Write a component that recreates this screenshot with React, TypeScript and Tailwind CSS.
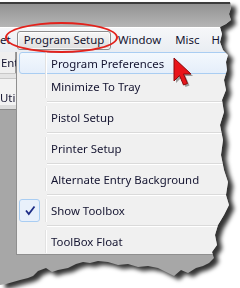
import React from 'react';

type Item = { label: string; sep?: boolean; checked?: boolean; active?: boolean };

const items: Item[] = [
  { label: 'Program Preferences', active: true },
  { label: 'Minimize To Tray' },
  { label: 'Pistol Setup', sep: true },
  { label: 'Printer Setup', sep: true },
  { label: 'Alternate Entry Background', sep: true },
  { label: 'Show Toolbox', sep: true, checked: true },
  { label: 'ToolBox Float', sep: true },
];

function MenuRow({ item }: { item: Item }) {
  return (
    <>
      {item.sep ? (
        <div className="h-[8px] flex items-center pl-[30px]">
          <div className="w-full h-[2px] border-t border-[#dadada] bg-white" />
        </div>
      ) : null}
      <div className="h-[23px] relative flex items-center">
        {item.active ? (
          <div className="absolute left-[2px] right-0 top-0 bottom-[1px] rounded-[3px] border border-[#a9cdf2] bg-gradient-to-b from-[#f3f8fd] to-[#e5eefa]" />
        ) : null}
        <div className="w-[28px] h-full flex items-center relative">
          {item.checked ? (
            <div className="w-[21px] h-[23px] ml-[2px] rounded-[3px] border border-[#a9cdf2] bg-[#e8f0fb] flex items-center justify-center">
              <svg width="12" height="11" viewBox="0 0 12 11">
                <path d="M2 5.5 L4.8 9 L10.5 1.5" stroke="#1c2b86" strokeWidth="1.8" fill="none" />
              </svg>
            </div>
          ) : null}
        </div>
        <div className="w-[2px] h-full border-l border-[#e2e2e2] bg-white relative" />
        <span className="relative pl-[4px] text-[11.4px] text-[#141430] whitespace-nowrap">{item.label}</span>
      </div>
    </>
  );
}

export default function App() {
  return (
    <div
      className="w-[240px] h-[288px] bg-white relative overflow-hidden pt-[2px]"
      style={{ fontFamily: '"Noto Sans", "Liberation Sans", sans-serif' }}
    >
      <div className="drop-shadow-[5px_4px_2px_rgba(0,0,0,0.8)]">
        <div className="w-[236px] h-[284px] flex flex-col bg-[#a7a7a7] [clip-path:polygon(0px_0px,230px_0px,231px_6px,229px_12px,231px_18px,226px_22px,220px_25px,222px_32px,220px_40px,223px_48px,228px_53px,226px_60px,227px_68px,224px_78px,226px_88px,222px_98px,224px_110px,220px_123px,223px_138px,221px_153px,224px_168px,228px_180px,226px_193px,229px_203px,224px_213px,218px_223px,215px_233px,217px_243px,212px_250px,214px_256px,209px_261px,203px_264px,196px_266px,188px_271px,181px_268px,174px_274px,166px_270px,158px_266px,148px_264px,138px_265px,128px_262px,118px_263px,108px_260px,98px_259px,90px_261px,83px_260px,76px_262px,68px_266px,58px_268px,52px_270px,46px_266px,38px_269px,33px_274px,28px_276px,20px_278px,13px_280px,6px_282px,0px_283px)]">
          {/* grey window top */}
          <div className="h-[25px] border-t-2 border-[#3c3c3c] bg-gradient-to-b from-[#939393] to-[#b5b5b5]" />
          {/* menu bar */}
          <div className="h-[25px] border-t border-white bg-gradient-to-b from-[#f6f7f9] to-[#e9edf2] flex items-center text-[11.4px] text-[#141430]">
            <span className="w-[16px]">et</span>
            <div className="h-[19px] w-[94px] ml-[1px] justify-center flex items-center rounded-[3px] border border-[#8d8d8d] bg-gradient-to-b from-[#f7f7f7] to-[#dedede] shadow-[inset_0_0_0_1px_rgba(255,255,255,0.7)]">
              Program Setup
            </div>
            <span className="ml-[7px]">Window</span>
            <span className="ml-[14px]">Misc</span>
            <span className="ml-[12px]">H</span>
          </div>
          {/* body */}
          <div className="flex flex-1 items-start">
            <div className="w-[16px] flex flex-col text-[11.4px] text-[#141430] overflow-hidden">
              <div className="h-[21px] bg-[#efefef] border-r border-[#9a9a9a] flex items-center whitespace-nowrap pl-[1px]">Ent</div>
              <div className="h-[6px] border-t border-[#7a7a7a] bg-[#e4e4e4] border-b border-[#c8c8c8]" />
              <div className="h-[12px] bg-[#f2f2f2]" />
              <div className="h-[14px] bg-[#f2f2f2] flex items-center whitespace-nowrap">Utilit</div>
              <div className="h-[5px] bg-[#dcdcdc] border-b border-[#8a8a8a]" />
            </div>
            <div className="flex-1 h-[203px] bg-[#f0f0f0] border-l border-b border-[#8f8f8f] flex flex-col">
              {items.map((item) => (
                <MenuRow key={item.label} item={item} />
              ))}
            </div>
          </div>
        </div>
      </div>
      {/* red highlight ellipse */}
      <div className="absolute left-[5px] top-[22px] w-[113px] h-[31px] rounded-[50%] border-2 border-[#e2221c]" />
      {/* red cursor */}
      <svg className="absolute left-[172px] top-[56px]" width="26" height="34" viewBox="0 0 26 34">
        <path d="M4 4 L4 27 L9.5 21.5 L13.5 31 L17.5 29.5 L13.5 20 L21 20 Z" fill="rgba(0,0,0,0.35)" />
        <path d="M2 2 L2 25 L7.5 19.5 L11.5 29 L15.5 27.5 L11.5 18 L19 18 Z" fill="#e8151b" stroke="#8c0a0c" strokeWidth="1" strokeLinejoin="round" />
      </svg>
    </div>
  );
}
